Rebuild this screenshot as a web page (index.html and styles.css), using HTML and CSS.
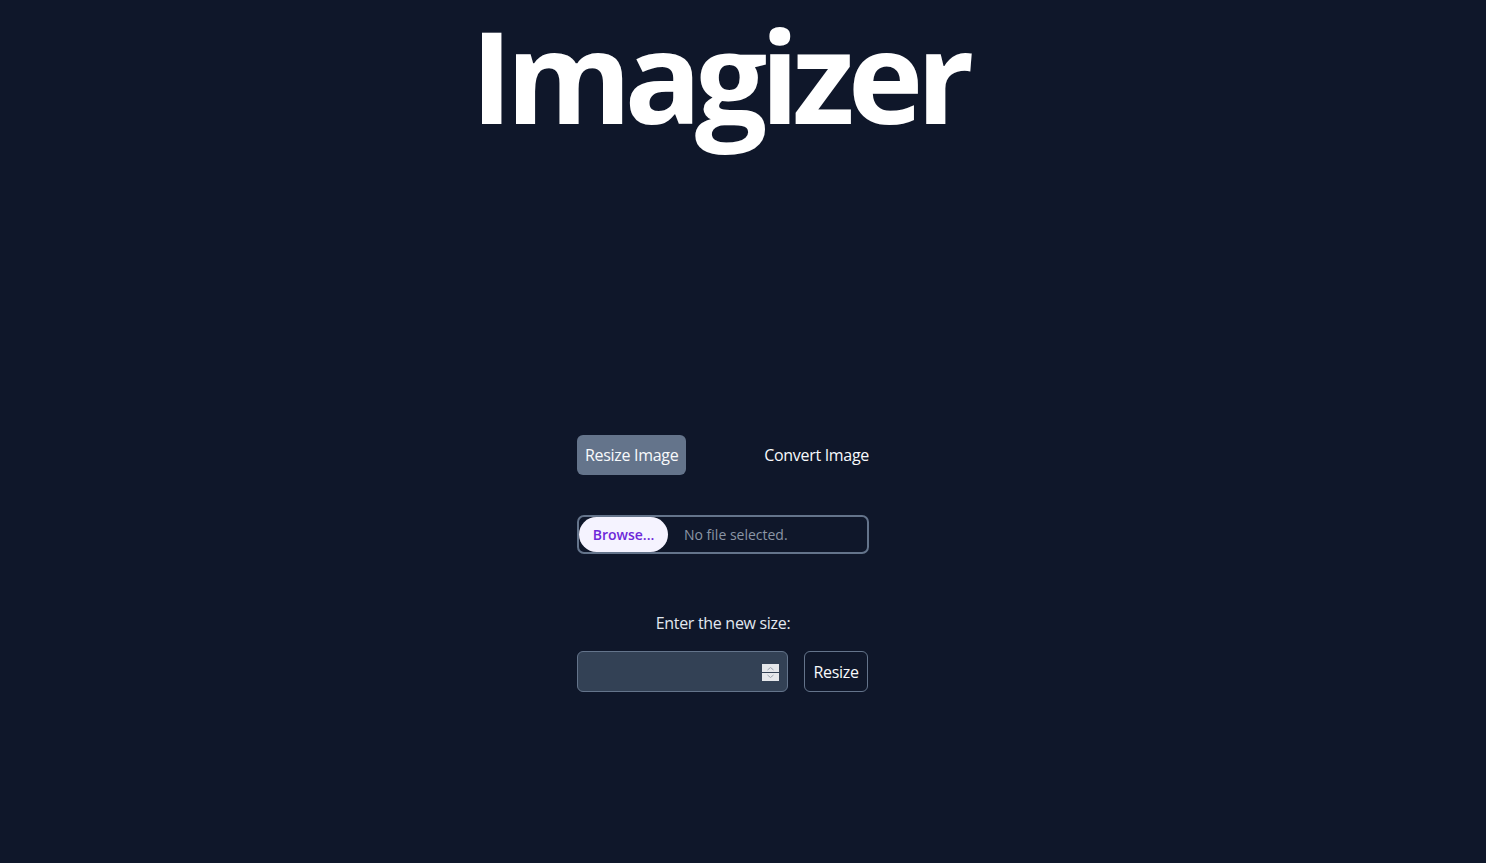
FILE: index.html
```html
<!DOCTYPE html>
<html lang="en">
<head>
<meta charset="utf-8">
<title>Imagizer</title>
<link rel="stylesheet" href="styles.css">
</head>
<body>
<main class="page">
  <h1 class="title">Imagizer</h1>
  <section class="panel">
    <div class="tabs">
      <button class="tab tab-active">Resize Image</button>
      <button class="tab">Convert Image</button>
    </div>
    <div class="file">
      <span class="browse">Browse...</span>
      <span class="file-name">No file selected.</span>
    </div>
    <label class="size-label">Enter the new size:</label>
    <div class="size-row">
      <div class="number">
        <input class="number-input" type="text" aria-label="size">
        <span class="spin">
          <svg width="17" height="17" viewBox="0 0 17 17">
            <rect width="17" height="17" fill="#e5e7eb"/>
            <line x1="0" y1="8.5" x2="17" y2="8.5" stroke="#334155" stroke-width="1"/>
            <polyline points="5.5,6 8.5,3.5 11.5,6" fill="none" stroke="#9ca3af" stroke-width="1"/>
            <polyline points="5.5,11 8.5,13.5 11.5,11" fill="none" stroke="#9ca3af" stroke-width="1"/>
          </svg>
        </span>
      </div>
      <button class="resize-btn">Resize</button>
    </div>
  </section>
</main>
</body>
</html>
```
FILE: styles.css
```css
html, body {
  margin: 0;
  padding: 0;
  background: #0f172a;
  height: 100%;
}
body {
  font-family: "Open Sans", "Noto Sans", sans-serif;
  color: #f1f5f9;
}
.page {
  display: flex;
  flex-direction: column;
  align-items: center;
  padding-right: 40px;
}
.title {
  margin: 1px 0 0;
  padding: 0 24px 0 16px;
  font-size: 128px;
  line-height: 1.15;
  font-weight: 700;
  color: #ffffff;
  letter-spacing: -7px;
}
.panel {
  width: 292px;
  margin-top: 287px;
  display: flex;
  flex-direction: column;
}
.tabs {
  display: flex;
  justify-content: space-between;
  align-items: center;
}
.tab {
  font-family: inherit;
  font-size: 16px;
  letter-spacing: -0.3px;
  height: 40px;
  padding: 0 8px;
  border: none;
  border-radius: 6px;
  background: transparent;
  color: #f8fafc;
}
.tab:last-child {
  padding-right: 0;
}
.tab-active {
  background: #64748b;
}
.file {
  margin-top: 40px;
  height: 35px;
  border: 2px solid #64748b;
  border-radius: 7px;
  display: flex;
  align-items: center;
  gap: 16px;
}
.browse {
  height: 35px;
  width: 89px;
  border-radius: 18px;
  background: #f5f3ff;
  color: #6d28d9;
  font-size: 14px;
  font-weight: 600;
  display: flex;
  align-items: center;
  justify-content: center;
}
.file-name {
  font-size: 14px;
  color: #8b95a5;
}
.size-label {
  margin-top: 58px;
  text-align: center;
  font-size: 16px;
  letter-spacing: -0.3px;
  color: #e2e8f0;
}
.size-row {
  margin-top: 17px;
  display: flex;
  gap: 16px;
}
.number {
  position: relative;
  width: 211px;
  height: 41px;
}
.number-input {
  box-sizing: border-box;
  width: 100%;
  height: 100%;
  background: #334155;
  border: 1px solid #64748b;
  border-radius: 6px;
  color: #f8fafc;
  font-family: inherit;
  font-size: 16px;
  padding: 0 12px;
}
.spin {
  position: absolute;
  right: 9px;
  top: 13px;
  width: 17px;
  height: 17px;
  display: flex;
}
.resize-btn {
  box-sizing: border-box;
  width: 64px;
  height: 41px;
  border: 1px solid #64748b;
  border-radius: 6px;
  background: transparent;
  color: #f8fafc;
  font-family: inherit;
  font-size: 16px;
  letter-spacing: -0.3px;
  padding: 0;
}
```
